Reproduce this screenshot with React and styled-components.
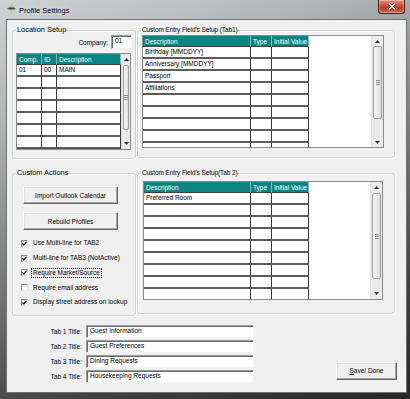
import styled, { createGlobalStyle } from "styled-components";

const GlobalStyle = createGlobalStyle`
  html, body { margin: 0; padding: 0; background: #fff; }
  body { font-family: "Liberation Sans", Arial, sans-serif; }
  * { box-sizing: border-box; }
`;

// window chrome

const Window = styled.div`
  width: 410px;
  height: 399px;
  display: flex;
  flex-direction: column;
  background: linear-gradient(160deg, #cfd2d5 0%, #b2b5b8 22%, #7a7d80 50%, #404142 78%, #262626 100%);
  font-size: 6.5px;
  color: #000;
`;

const TitleBar = styled.div`
  height: 19px;
  flex-shrink: 0;
  display: flex;
  align-items: flex-start;
`;

const AppIcon = styled.svg`
  margin: 4px 0 0 7px;
`;

const Title = styled.span`
  font-size: 7.5px;
  line-height: 9px;
  margin: 6px 0 0 3px;
  text-shadow: 0 0 4px rgba(255,255,255,0.9);
`;

const CloseButton = styled.div`
  margin: 0 5px 0 auto;
  width: 27px;
  height: 14px;
  display: flex;
  align-items: center;
  justify-content: center;
  border: 1px solid #4e1a14;
  border-top: none;
  border-radius: 0 0 3px 3px;
  background: linear-gradient(#e08a78 0%, #c8523d 45%, #b33a24 55%, #d0674c 100%);
  box-shadow: inset 0 0 0 1px rgba(255,255,255,0.35);
`;

const Client = styled.div`
  flex: 1;
  margin: 0 3px 6px 6px;
  border: 1px solid #707070;
  background: #f0f0f0;
  padding: 10px 0 0 5px;
  display: flex;
  flex-direction: column;
`;

// group boxes

const GroupGrid = styled.div`
  display: grid;
  grid-template-columns: 124px 258px;
  grid-template-rows: 129px 143px;
  column-gap: 1px;
  row-gap: 14px;
`;

const Group = styled.div`
  position: relative;
  height: ${p => p.$h}px;
  border: 1px solid #cdd1d4;
  border-radius: 3px;
  box-shadow: 1px 1px 0 #fff, inset 1px 1px 0 #fff;
`;

const Caption = styled.span`
  position: absolute;
  top: ${p => (p.$small ? -5 : -6)}px;
  left: 3px;
  padding: 0 1px;
  font-size: ${p => (p.$small ? 6.5 : 7.4)}px;
  letter-spacing: ${p => (p.$small ? -0.1 : 0)}px;
  line-height: ${p => (p.$small ? 8 : 10)}px;
  background: #f0f0f0;
  white-space: nowrap;
`;

const CompanyRow = styled.div`
  display: flex;
  justify-content: flex-end;
  align-items: center;
  gap: 3px;
  margin: 4px 3px 0 0;
`;

const SunkenInput = styled.div`
  width: ${p => p.$w}px;
  height: ${p => p.$h}px;
  background: #fff;
  border: 1px solid;
  border-color: #9c9c9c #f4f4f4 #f4f4f4 #9c9c9c;
  box-shadow: inset 1px 1px 0 #6a6a6a;
  padding: 1px 0 0 3px;
  line-height: 8px;
  white-space: nowrap;
`;

// data grids

const GridFrame = styled.div`
  width: ${p => p.$w}px;
  height: ${p => p.$h}px;
  margin: ${p => p.$m};
  display: flex;
  background: #fff;
  border: 1px solid #8a8a8a;
  overflow: hidden;
`;

const GridBody = styled.div`
  flex: 1;
  overflow: hidden;
`;

const GridRow = styled.div`
  display: grid;
  grid-template-columns: ${p => p.$cols};
  height: ${p => (p.$head ? 11 : 12)}px;
`;

const HeadCell = styled.div`
  background: #0b8582;
  color: #fff;
  padding-left: 2px;
  line-height: 11px;
  white-space: nowrap;
  overflow: hidden;
  border-right: 1px solid #7fbcba;
  border-bottom: 1px solid #3e3e3e;
`;

const Cell = styled.div`
  padding-left: 2px;
  line-height: 10px;
  white-space: nowrap;
  overflow: hidden;
  border-right: 1px solid #3a3a3a;
  border-bottom: 2px solid #5c5c5c;
`;

const BlankCell = styled.div`
  background: #fff;
`;

const ScrollTrack = styled.div`
  width: ${p => p.$w}px;
  flex-shrink: 0;
  display: flex;
  flex-direction: column;
  background: #ebebeb;
  border-left: 1px solid #e2e2e2;
`;

const ArrowButton = styled.div`
  height: ${p => p.$h}px;
  flex-shrink: 0;
  display: flex;
  align-items: center;
  justify-content: center;
  margin-top: ${p => (p.$down ? "auto" : "0")};
`;

const Thumb = styled.div`
  height: ${p => p.$h}px;
  margin: 0 1px;
  border: 1px solid #9b9b9b;
  border-radius: 2px;
  background: linear-gradient(to right, #f7f7f7, #dedede);
  display: flex;
  align-items: center;
  justify-content: center;
`;

const Arrow = ({ down }) => (
  <svg width="5" height="3" viewBox="0 0 5 3">
    <polygon points={down ? "0,0 5,0 2.5,3" : "0,3 5,3 2.5,0"} fill="#333" />
  </svg>
);

const ScrollBar = ({ w, arrow, thumb }) => (
  <ScrollTrack $w={w}>
    <ArrowButton $h={arrow}><Arrow /></ArrowButton>
    <Thumb $h={thumb}>
      <svg width="4" height="5" viewBox="0 0 4 5">
        <path d="M0 0.5H4M0 2.5H4M0 4.5H4" stroke="#8a8a8a" strokeWidth="1" />
      </svg>
    </Thumb>
    <ArrowButton $h={arrow} $down><Arrow down /></ArrowButton>
  </ScrollTrack>
);

const DataGrid = ({ w, h, m, cols, headers, rows, blank, bar }) => (
  <GridFrame $w={w} $h={h} $m={m}>
    <GridBody>
      <GridRow $cols={cols} $head>
        {headers.map(t => <HeadCell key={t}>{t}</HeadCell>)}
        {blank && <BlankCell />}
      </GridRow>
      {rows.map((r, i) => (
        <GridRow key={i} $cols={cols}>
          {r.map((t, j) => <Cell key={j}>{t}</Cell>)}
          {blank && <BlankCell />}
        </GridRow>
      ))}
    </GridBody>
    <ScrollBar {...bar} />
  </GridFrame>
);

// custom actions

const ButtonStack = styled.div`
  display: flex;
  flex-direction: column;
  gap: 8px;
  margin: 12px 0 0 10px;
`;

const WinButton = styled.button`
  width: ${p => p.$w}px;
  height: 18px;
  margin: 0;
  padding: 0;
  font: inherit;
  font-size: 6.5px;
  color: #000;
  background: #f0f0f0;
  border: 1px solid;
  border-color: #fff #646464 #646464 #fff;
  box-shadow: inset -1px -1px 0 #a8a8a8, inset 1px 1px 0 #e3e3e3;
`;

const CheckList = styled.div`
  display: flex;
  flex-direction: column;
  margin: 6px 0 0 8px;
`;

const CheckRow = styled.div`
  height: 14.75px;
  display: flex;
  align-items: center;
  gap: 4px;
`;

const Box = styled.span`
  width: 7px;
  height: 7px;
  flex-shrink: 0;
  display: flex;
  align-items: center;
  justify-content: center;
  background: #fff;
  border: 1px solid;
  border-color: #8a8a8a #e6e6e6 #e6e6e6 #8a8a8a;
`;

const CheckLabel = styled.span`
  line-height: 8px;
  padding: 0 1px;
  white-space: nowrap;
  outline: ${p => (p.$focus ? "1px dotted #000" : "none")};
`;

const CheckBox = ({ checked, focus, children }) => (
  <CheckRow>
    <Box>
      {checked && (
        <svg width="5" height="5" viewBox="0 0 5 5">
          <path d="M0.4 2.4 L1.9 3.9 L4.6 0.8" fill="none" stroke="#111" strokeWidth="1.3" />
        </svg>
      )}
    </Box>
    <CheckLabel $focus={focus}>{children}</CheckLabel>
  </CheckRow>
);

// bottom

const BottomArea = styled.div`
  display: flex;
  align-items: flex-end;
  justify-content: space-between;
  margin-top: 9px;
`;

const TitleGrid = styled.div`
  display: grid;
  grid-template-columns: 70px 168px;
  grid-auto-rows: 12.5px;
  column-gap: 4px;
  row-gap: 2.5px;
  align-items: center;
`;

const TitleLabel = styled.span`
  text-align: right;
  white-space: nowrap;
`;

const SaveButton = styled(WinButton)`
  margin: 0 9px 3px 0;
`;

const tab1 = ["Birthday [MMDDYY]", "Anniversary [MMDDYY]", "Passport", "Affiliations", "", "", "", "", ""];
const tab2 = ["Preferred Room", "", "", "", "", "", "", "", "", ""];
const locations = [["01", "00", "MAIN"], ...Array.from({ length: 7 }, () => ["", "", ""])];
const titles = ["Guest Information", "Guest Preferences", "Dining Requests", "Housekeeping Requests"];

const App = () => {
    return (
        <Window>
            <GlobalStyle />
            <TitleBar>
                <AppIcon width="9" height="9" viewBox="0 0 9 9">
                    <polygon points="4.5,0 6,3 4.5,4.5 3,3" fill="#e8c21a" />
                    <polygon points="9,4.5 6,6 4.5,4.5 6,3" fill="#2f5fb8" />
                    <polygon points="4.5,9 3,6 4.5,4.5 6,6" fill="#e8c21a" />
                    <polygon points="0,4.5 3,3 4.5,4.5 3,6" fill="#2f5fb8" />
                    <circle cx="4.5" cy="4.5" r="1" fill="#1a2a55" />
                </AppIcon>
                <Title>Profile Settings</Title>
                <CloseButton>
                    <svg width="8" height="7" viewBox="0 0 8 7">
                        <path d="M1 0.5 L7 6.5 M7 0.5 L1 6.5" stroke="#5a1a10" strokeWidth="2.6" />
                        <path d="M1 0.5 L7 6.5 M7 0.5 L1 6.5" stroke="#fff" strokeWidth="1.4" />
                    </svg>
                </CloseButton>
            </TitleBar>
            <Client>
                <GroupGrid>
                    <Group $h={129}>
                        <Caption>Location Setup</Caption>
                        <CompanyRow>
                            <span>Company:</span>
                            <SunkenInput $w={21} $h={14}>01</SunkenInput>
                        </CompanyRow>
                        <DataGrid
                            w={115} h={97} m="4px 0 0 3px"
                            cols="25px 15px 1fr"
                            headers={["Comp.", "ID", "Description"]}
                            rows={locations}
                            bar={{ w: 9, arrow: 11, thumb: 65 }}
                        />
                    </Group>
                    <Group $h={128}>
                        <Caption $small>Custom Entry Field's Setup (Tab1)</Caption>
                        <DataGrid
                            w={242} h={113} m="4px 0 0 4px"
                            cols="108px 21px 37px 1fr"
                            headers={["Description", "Type", "Initial Value"]}
                            rows={tab1.map(t => [t, "", ""])}
                            blank
                            bar={{ w: 12, arrow: 10, thumb: 73 }}
                        />
                    </Group>
                    <Group $h={143}>
                        <Caption>Custom Actions</Caption>
                        <ButtonStack>
                            <WinButton $w={95}>Import Outlook Calendar</WinButton>
                            <WinButton $w={95}>Rebuild Profiles</WinButton>
                        </ButtonStack>
                        <CheckList>
                            <CheckBox checked>Use Multi-line for TAB2</CheckBox>
                            <CheckBox checked>Multi-line for TAB3 (NotActive)</CheckBox>
                            <CheckBox checked focus>Require Market/Source</CheckBox>
                            <CheckBox>Require email address</CheckBox>
                            <CheckBox checked>Display street address on lookup</CheckBox>
                        </CheckList>
                    </Group>
                    <Group $h={141}>
                        <Caption $small>Custom Entry Field's Setup(Tab 2)</Caption>
                        <DataGrid
                            w={240} h={119} m="7px 0 0 5px"
                            cols="107px 21px 37px 1fr"
                            headers={["Description", "Type", "Initial Value"]}
                            rows={tab2.map(t => [t, "", ""])}
                            blank
                            bar={{ w: 12, arrow: 11, thumb: 86 }}
                        />
                    </Group>
                </GroupGrid>
                <BottomArea>
                    <TitleGrid>
                        {titles.map((t, i) => [
                            <TitleLabel key={"l" + i}>Tab {i + 1} Title:</TitleLabel>,
                            <SunkenInput key={"v" + i} $w={168} $h={12.5}>{t}</SunkenInput>
                        ])}
                    </TitleGrid>
                    <SaveButton $w={61}><u>S</u>ave/ Done</SaveButton>
                </BottomArea>
            </Client>
        </Window>
    )
}

export default App;
